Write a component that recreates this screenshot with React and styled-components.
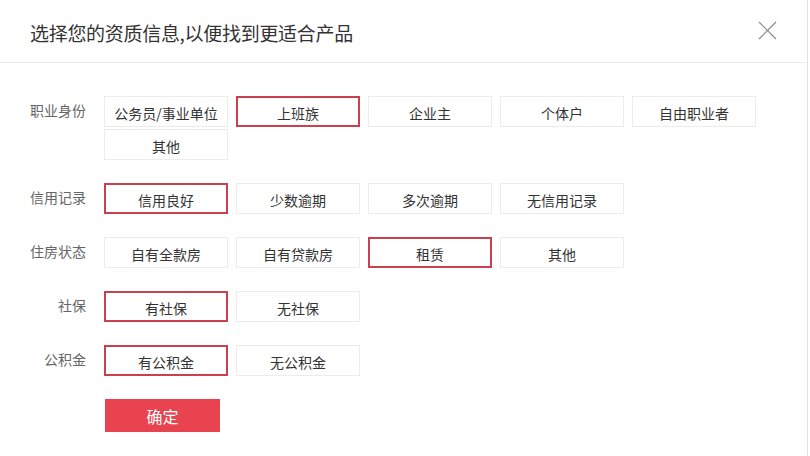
import React, { useState } from "react";
import styled, { createGlobalStyle } from "styled-components";

const Global = createGlobalStyle`
  html, body { margin: 0; padding: 0; background: #fff; }
  body { font-family: "Noto Sans CJK SC", "Noto Sans", sans-serif; }
  * { box-sizing: border-box; }
`;

const Modal = styled.div`
  width: 808px;
  height: 456px;
  background: #fff;
  border-right: 1px solid #e2e2e2;
  display: flex;
  flex-direction: column;
`;

const Header = styled.div`
  height: 63px;
  border-bottom: 1px solid #ececec;
  display: flex;
  align-items: center;
  justify-content: space-between;
  padding: 0 30px 0 30px;
`;

const Title = styled.h2`
  margin: 0;
  font-size: 19px;
  font-weight: normal;
  color: #333;
  letter-spacing: -0.3px;
  padding-top: 3px;
`;

const Close = styled.button`
  width: 19px;
  height: 19px;
  padding: 0;
  border: none;
  background: transparent;
  cursor: pointer;
  display: flex;
  margin-top: -2px;
`;

const Body = styled.div`
  padding-top: 33px;
`;

const Row = styled.div`
  display: flex;
  margin-bottom: 21px;
`;

const Label = styled.div`
  width: 86px;
  margin-right: 18px;
  text-align: right;
  font-size: 14px;
  color: #666;
  line-height: 20px;
  padding-top: 4px;
  flex-shrink: 0;
`;

const Options = styled.div`
  display: flex;
  flex-wrap: wrap;
  width: 664px;
`;

const Option = styled.div`
  width: 124px;
  height: 31px;
  margin: 0 8px 2px 0;
  border: ${(p) => (p.$active ? "2px solid #c9414f" : "1px solid #ececec")};
  display: flex;
  align-items: center;
  justify-content: center;
  font-size: 14px;
  color: #333;
  cursor: pointer;
  padding-top: 2px;
`;

const Footer = styled.div`
  padding-left: 105px;
`;

const Confirm = styled.button`
  width: 115px;
  height: 33px;
  border: none;
  background: #e8434e;
  color: #fff;
  font-family: inherit;
  font-size: 16px;
  cursor: pointer;
  padding-top: 1px;
`;

const groups = [
  { label: "职业身份", options: ["公务员/事业单位", "上班族", "企业主", "个体户", "自由职业者", "其他"], selected: 1 },
  { label: "信用记录", options: ["信用良好", "少数逾期", "多次逾期", "无信用记录"], selected: 0 },
  { label: "住房状态", options: ["自有全款房", "自有贷款房", "租赁", "其他"], selected: 2 },
  { label: "社保", options: ["有社保", "无社保"], selected: 0 },
  { label: "公积金", options: ["有公积金", "无公积金"], selected: 0 },
];

export default function App() {
  const [sel, setSel] = useState(groups.map((g) => g.selected));
  return (
    <>
      <Global />
      <Modal>
        <Header>
          <Title>选择您的资质信息,以便找到更适合产品</Title>
          <Close aria-label="关闭">
            <svg width="19" height="19" viewBox="0 0 19 19">
              <path d="M1 1 L18 18 M18 1 L1 18" stroke="#8a8a8a" strokeWidth="1.2" fill="none" />
            </svg>
          </Close>
        </Header>
        <Body>
          {groups.map((g, gi) => (
            <Row key={g.label}>
              <Label>{g.label}</Label>
              <Options>
                {g.options.map((o, oi) => (
                  <Option
                    key={o}
                    $active={sel[gi] === oi}
                    onClick={() => setSel((s) => s.map((v, i) => (i === gi ? oi : v)))}
                  >
                    {o}
                  </Option>
                ))}
              </Options>
            </Row>
          ))}
          <Footer>
            <Confirm>确定</Confirm>
          </Footer>
        </Body>
      </Modal>
    </>
  );
}
